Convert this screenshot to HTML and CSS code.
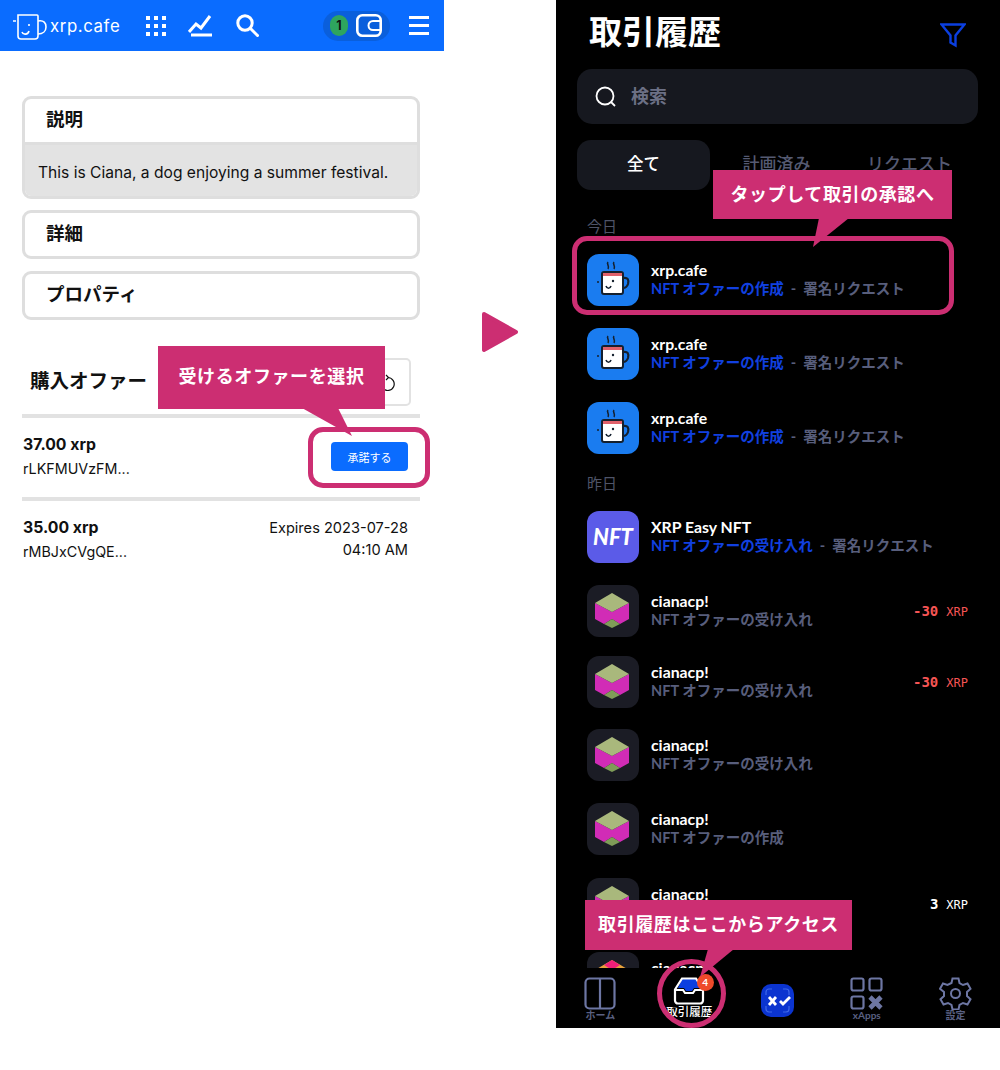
FILE: index.html
```html
<!doctype html>
<html lang="ja">
<head>
    <meta charset="UTF-8">
    <title>xrp.cafe</title>
    <link rel="stylesheet" href="styles.css">
</head>
<body>
<svg class="defs" width="0" height="0">
    <symbol id="cube" viewBox="0 0 52 52">
        <polygon points="8,18 25,27 42,18 42,34 33,39 25,34 17,39 8,34" fill="#d12cb6"/>
        <polygon points="25,8 42,18 25,27 8,18" fill="#a9b87c"/>
        <polygon points="25,34 33,39 25,43 17,39" fill="#7f9c58"/>
    </symbol>
    <symbol id="mug" viewBox="0 0 52 52">
        <path d="M21 8c-2 2 2 4 0 7M27 8c-2 2 2 4 0 7" fill="none" stroke="#14202e" stroke-width="1.6"/>
        <rect x="15" y="18" width="21" height="22" rx="2" fill="#fff" stroke="#14202e" stroke-width="2"/>
        <rect x="16" y="19" width="19" height="3" fill="#e0606a"/>
        <path d="M36 24c5-1 6 2 5 6-1 3-3 4-5 4" fill="none" stroke="#14202e" stroke-width="2.2"/>
        <circle cx="11" cy="28" r="1" fill="#14202e"/>
        <circle cx="26" cy="27" r="1.2" fill="#14202e"/>
        <path d="M19 32c1 3 4 3 5 0" fill="none" stroke="#14202e" stroke-width="1.6"/>
    </symbol>
</svg>

<div class="left">
    <header class="topbar">
        <svg class="logo" width="36" height="30" viewBox="0 0 36 30" fill="none" stroke="#fff" stroke-width="1.6">
            <path d="M1 10h3M6 4h19a1 1 0 0 1 1 1v20a3 3 0 0 1-3 3H9a3 3 0 0 1-3-3z"/>
            <path d="M26 10c6-1 8 2 8 6s-3 7-8 7"/>
            <path d="M10 21c1 3 6 3 7-1M17 13v2"/>
        </svg>
        <span class="brand">xrp.cafe</span>
        <svg class="grid-ico" width="20" height="20" viewBox="0 0 20 20" fill="#fff">
            <rect width="4" height="4"/><rect x="8" width="4" height="4"/><rect x="16" width="4" height="4"/>
            <rect y="8" width="4" height="4"/><rect x="8" y="8" width="4" height="4"/><rect x="16" y="8" width="4" height="4"/>
            <rect y="16" width="4" height="4"/><rect x="8" y="16" width="4" height="4"/><rect x="16" y="16" width="4" height="4"/>
        </svg>
        <svg class="chart-ico" width="24" height="22" viewBox="0 0 24 22" fill="none" stroke="#fff" stroke-width="3">
            <path d="M1 17 8 9l5 4 9-12"/>
            <path d="M3 20h21"/>
        </svg>
        <svg class="search-ico" width="23" height="23" viewBox="0 0 23 23" fill="none" stroke="#fff" stroke-width="3">
            <circle cx="9" cy="9" r="7.2"/>
            <path d="m14.500 14.500 7 7" stroke-linecap="round"/>
        </svg>
        <div class="wallet-pill">
            <span class="count">1</span>
            <svg width="26" height="23" viewBox="0 0 26 23" fill="none" stroke="#fff" stroke-width="2.6">
                <rect x="1.3" y="1.3" width="23.4" height="20.4" rx="5"/>
                <path d="M24 7h-7a4 4 0 0 0 0 9h7" stroke-width="2"/>
            </svg>
        </div>
        <div class="burger"><i></i><i></i><i></i></div>
    </header>

    <div class="content">
        <section class="card">
            <h3>説明</h3>
            <p>This is Ciana, a dog enjoying a summer festival.</p>
        </section>
        <section class="card card-detail"><h3>詳細</h3></section>
        <section class="card"><h3>プロパティ</h3></section>

        <div class="offers-head">
            <h2>購入オファー</h2>
            <div class="refresh">
                <svg width="16" height="18" viewBox="0 0 16 18" fill="none" stroke="#111" stroke-width="1.2">
                    <path d="M9 4.500a6.500 6.500 0 1 1-5 11M7 2l2.500 2.500L7 7"/>
                </svg>
            </div>
        </div>

        <div class="offer">
            <div>
                <b>37.00 xrp</b>
                <span>rLKFMUVzFM...</span>
            </div>
            <button class="accept">承諾する</button>
        </div>
        <div class="offer">
            <div>
                <b>35.00 xrp</b>
                <span>rMBJxCVgQE...</span>
            </div>
            <div class="expires">Expires 2023-07-28<br>04:10 AM</div>
        </div>
    </div>

    <div class="callout callout-offer">受けるオファーを選択</div>
    <svg class="tail tail-offer" width="52" height="29" viewBox="0 0 52 29"><polygon points="0,0 36,0 50,28" fill="#cc2e72"/></svg>
    <div class="ring ring-offer"></div>
</div>

<div class="middle">
    <svg width="38" height="42" viewBox="0 0 38 42"><path d="M3 3 35 21 3 39z" fill="#cc2e72" stroke="#cc2e72" stroke-width="4" stroke-linejoin="round"/></svg>
</div>

<div class="right">
    <div class="title-row">
        <h1>取引履歴</h1>
        <svg width="26" height="25" viewBox="0 0 26 25" fill="none" stroke="#0b3fe0" stroke-width="2.4">
            <path d="M1.500 1.500h23l-9 11v10l-5-3v-7z"/>
        </svg>
    </div>
    <div class="search">
        <svg width="21" height="21" viewBox="0 0 21 21" fill="none" stroke="#fff" stroke-width="1.8">
            <circle cx="10" cy="10" r="8.500"/>
            <path d="m16 16 4 4"/>
        </svg>
        <span>検索</span>
    </div>
    <div class="tabs">
        <div class="tab on">全て</div>
        <div class="tab">計画済み</div>
        <div class="tab">リクエスト</div>
    </div>

    <div class="list">
        <div class="day">今日</div>
        <div class="row">
            <svg class="app blue"><use href="#mug"/></svg>
            <div class="txt"><b>xrp.cafe</b><span><em>NFT オファーの作成</em> &nbsp;-&nbsp; 署名リクエスト</span></div>
        </div>
        <div class="row">
            <svg class="app blue"><use href="#mug"/></svg>
            <div class="txt"><b>xrp.cafe</b><span><em>NFT オファーの作成</em> &nbsp;-&nbsp; 署名リクエスト</span></div>
        </div>
        <div class="row">
            <svg class="app blue"><use href="#mug"/></svg>
            <div class="txt"><b>xrp.cafe</b><span><em>NFT オファーの作成</em> &nbsp;-&nbsp; 署名リクエスト</span></div>
        </div>
        <div class="day">昨日</div>
        <div class="row">
            <div class="app nft">NFT</div>
            <div class="txt"><b>XRP Easy NFT</b><span><em>NFT オファーの受け入れ</em> &nbsp;-&nbsp; 署名リクエスト</span></div>
        </div>
        <div class="row row-71">
            <svg class="app dark"><use href="#cube"/></svg>
            <div class="txt"><b>cianacp!</b><span>NFT オファーの受け入れ</span></div>
            <div class="amount neg">-30<small>XRP</small></div>
        </div>
        <div class="row row-73">
            <svg class="app dark"><use href="#cube"/></svg>
            <div class="txt"><b>cianacp!</b><span>NFT オファーの受け入れ</span></div>
            <div class="amount neg">-30<small>XRP</small></div>
        </div>
        <div class="row">
            <svg class="app dark"><use href="#cube"/></svg>
            <div class="txt"><b>cianacp!</b><span>NFT オファーの受け入れ</span></div>
        </div>
        <div class="row row-75">
            <svg class="app dark"><use href="#cube"/></svg>
            <div class="txt"><b>cianacp!</b><span>NFT オファーの作成</span></div>
        </div>
        <div class="row">
            <svg class="app dark"><use href="#cube"/></svg>
            <div class="txt"><b>cianacp!</b><span>NFT オファーの受け入れ</span></div>
            <div class="amount">3<small>XRP</small></div>
        </div>
        <div class="row">
            <svg class="app dark" viewBox="0 0 52 52">
                <polygon points="25,8 42,18 25,27 8,18" fill="#e8a23c"/>
                <polygon points="25,8 33,13 25,18 17,13" fill="#f01e78"/>
            </svg>
            <div class="txt"><b>cianacp!</b><span>NFT オファーの受け入れ</span></div>
        </div>
    </div>

    <nav class="tabbar">
        <div class="nav-item">
            <svg width="32" height="33" viewBox="0 0 32 33" fill="none" stroke="#6d76a3" stroke-width="2.2">
                <rect x="1.500" y="1.500" width="29" height="30" rx="4"/>
                <path d="M16 1.500v30"/>
            </svg>
            <span>ホーム</span>
        </div>
        <div class="nav-item nav-active">
            <svg width="32" height="28" viewBox="0 0 32 28" fill="none" stroke="#fff" stroke-width="2.2">
                <path d="M9 2h14l4 9H21l-2 3h-6l-2-3H5z" fill="#0b3fe0" stroke="none"/>
                <path d="M9 1.500h14l7 11v11a3 3 0 0 1-3 3H5a3 3 0 0 1-3-3v-11zM2 13h8l2 3h8l2-3h8"/>
            </svg>
            <span>取引履歴</span>
            <i class="badge">4</i>
        </div>
        <div class="nav-item nav-xumm">
            <svg width="33" height="33" viewBox="0 0 33 33">
                <rect width="33" height="33" rx="10" fill="#0b34d0"/>
                <path d="M5 11V8a3 3 0 0 1 3-3h3M22 5h3a3 3 0 0 1 3 3v3M28 22v3a3 3 0 0 1-3 3h-3M11 28H8a3 3 0 0 1-3-3v-3" fill="none" stroke="#3f68e8" stroke-width="1.2"/>
                <path d="m8 13 7 8m0-8-7 8M19 17l3 3 7-7" fill="none" stroke="#fff" stroke-width="2.800"/>
            </svg>
        </div>
        <div class="nav-item">
            <svg width="33" height="33" viewBox="0 0 33 33" fill="none" stroke="#6d76a3" stroke-width="2.2">
                <rect x="1.500" y="1.500" width="12" height="12" rx="2"/>
                <rect x="19.500" y="1.500" width="12" height="12" rx="2"/>
                <rect x="1.500" y="19.500" width="12" height="12" rx="2"/>
                <path d="m20 20 11 11m0-11-11 11" stroke-width="4.600"/>
            </svg>
            <span>xApps</span>
        </div>
        <div class="nav-item">
            <svg width="33" height="33" viewBox="0 0 33 33" fill="none" stroke="#6d76a3" stroke-width="2">
                <circle cx="16.500" cy="16.500" r="4.500"/>
                <path d="M13.500 1.500h6l1 4.500 3.500 2 4.500-1.500 3 5.200-3.500 3.200v4.200l3.500 3.200-3 5.200-4.500-1.500-3.500 2-1 4.500h-6l-1-4.500-3.500-2-4.500 1.500-3-5.200 3.500-3.200v-4.200L1 11.700l3-5.200 4.500 1.500 4-2z"/>
            </svg>
            <span>設定</span>
        </div>
    </nav>

    <div class="callout callout-tap">タップして取引の承認へ</div>
    <svg class="tail tail-tap" width="36" height="29" viewBox="0 0 36 29"><polygon points="6,0 36,0 0,29" fill="#cc2e72"/></svg>
    <div class="ring ring-tap"></div>
    <div class="callout callout-history">取引履歴はここからアクセス</div>
    <svg class="tail tail-history" width="36" height="28" viewBox="0 0 36 28"><polygon points="8,0 34,0 0,28" fill="#cc2e72"/></svg>
    <div class="ring ring-history"></div>
</div>
</body>
</html>
```

FILE: styles.css
```css
* {
    margin: 0;
    padding: 0;
    box-sizing: border-box;
}

body {
    width: 1000px;
    height: 1070px;
    display: flex;
    align-items: flex-start;
    background: #fff;
    overflow: hidden;
    font-family: Inter, "Noto Sans CJK JP", sans-serif;
    color: #111;
}

.defs {
    position: absolute;
}

/* left phone */
.left {
    position: relative;
    width: 444px;
    height: 600px;
}

.topbar {
    height: 51px;
    background: #0a6cff;
    display: flex;
    align-items: center;
    padding-left: 12px;
}

.brand {
    margin-left: 2px;
    width: 70px;
    font-size: 16.8px;
    letter-spacing: 0.6px;
    color: #fff;
}

.grid-ico {
    margin-left: 26px;
}

.chart-ico {
    margin-left: 22px;
}

.search-ico {
    margin-left: 24px;
}

.wallet-pill {
    margin-left: 64px;
    width: 67px;
    height: 30px;
    border-radius: 15px;
    background: #0a5fdc;
    display: flex;
    align-items: center;
    padding-left: 7px;
    gap: 8px;
}

.count {
    width: 18px;
    height: 21px;
    border-radius: 10px;
    background: #2ea55e;
    color: #111;
    font-size: 12.5px;
    font-weight: 700;
    line-height: 21px;
    text-align: center;
}

.burger {
    margin-left: 19px;
    width: 20px;
    display: flex;
    flex-direction: column;
    gap: 5px;
}

.burger i {
    height: 3px;
    background: #fff;
}

.content {
    padding: 45px 24px 0 22px;
}

.card {
    border: 3px solid #dedede;
    border-radius: 9px;
    margin-bottom: 11px;
    overflow: hidden;
}

.card-detail {
    margin-bottom: 12px;
}

.card h3 {
    height: 43px;
    padding-left: 21px;
    font-size: 18.5px;
    font-weight: 600;
    line-height: 41px;
}

.card p {
    border-top: 3px solid #dedede;
    background: #e3e3e3;
    height: 57px;
    margin-bottom: -3px;
    padding: 19px 0 0 13px;
    font-size: 15.6px;
    line-height: 18px;
    white-space: nowrap;
}

.offers-head {
    display: flex;
    justify-content: space-between;
    align-items: center;
    margin-top: 38px;
    height: 48px;
    padding-left: 8px;
    margin-right: 9px;
}

.offers-head h2 {
    padding-bottom: 5px;
    font-size: 19.5px;
    font-weight: 700;
}

.refresh {
    width: 40px;
    height: 48px;
    border: 2px solid #e2e2e2;
    border-radius: 5px;
    display: flex;
    align-items: center;
    justify-content: flex-end;
    padding-right: 14px;
}

.offer {
    margin-top: 8px;
    border-top: 4px solid #e2e2e2;
    height: 83px;
    padding: 16px 12px 0 1px;
    display: flex;
    justify-content: space-between;
}

.offer + .offer {
    margin-top: 0;
}

.offer b {
    display: block;
    font-size: 15.8px;
    line-height: 22px;
}

.offer span {
    display: block;
    margin-top: 1px;
    font-size: 14.3px;
    line-height: 24px;
}

.accept {
    margin-top: 8px;
    width: 77px;
    height: 29px;
    border: 0;
    border-radius: 4px;
    background: #0a6cff;
    color: #fff;
    font-family: inherit;
    font-size: 11px;
}

.expires {
    text-align: right;
    font-size: 14.6px;
    line-height: 22px;
}

/* arrow between the phones */
.middle {
    width: 112px;
    padding: 311px 0 0 37px;
}

/* right phone */
.right {
    position: relative;
    width: 444px;
    height: 1028px;
    background: #000;
    display: flex;
    flex-direction: column;
    font-family: Lato, "Noto Sans CJK JP", sans-serif;
    color: #fff;
}

.title-row {
    height: 69px;
    padding: 11px 34px 0 33px;
    display: flex;
    justify-content: space-between;
    align-items: flex-start;
}

.title-row h1 {
    font-size: 33px;
    font-weight: 700;
    line-height: 41px;
}

.title-row svg {
    margin-top: 12px;
}

.search {
    margin: 0 22px 0 21px;
    height: 55px;
    border-radius: 15px;
    background: #16181f;
    display: flex;
    align-items: center;
    gap: 15px;
    padding-left: 18px;
}

.search span {
    margin-top: -3px;
    font-size: 18px;
    font-weight: 700;
    color: #6c7085;
}

.tabs {
    margin: 16px 22px 18px 21px;
    display: flex;
    height: 50px;
}

.tab {
    width: 133px;
    border-radius: 14px;
    text-align: center;
    font-size: 17px;
    font-weight: 500;
    line-height: 48px;
    color: #555a72;
}

.tab.on {
    background: #16181f;
    color: #fff;
    font-size: 16.5px;
}

.list {
    flex: 1;
    min-height: 0;
    overflow: hidden;
    padding-left: 31px;
}

.day {
    height: 35px;
    font-size: 15px;
    line-height: 36px;
    color: #4f5468;
}

.row {
    height: 74px;
    display: flex;
    align-items: flex-start;
    padding-top: 11px;
    padding-right: 32px;
}

.row-71 {
    height: 71px;
}

.row-73 {
    height: 73px;
}

.row-75 {
    height: 75px;
}

.app {
    flex: none;
    width: 52px;
    height: 52px;
    border-radius: 12px;
}

.blue {
    background: #1a7cf0;
}

.dark {
    background: #1b1c25;
}

.nft {
    background: #5b5be8;
    color: #fff;
    font-size: 22px;
    font-weight: 900;
    font-style: italic;
    line-height: 52px;
    text-align: center;
}

.txt {
    flex: 1;
    margin-left: 12px;
    padding-top: 6px;
}

.txt b {
    display: block;
    font-size: 15.8px;
    font-weight: 700;
    line-height: 20px;
}

.txt span {
    display: block;
    font-size: 14.5px;
    font-weight: 700;
    line-height: 18px;
    color: #585e7c;
    white-space: nowrap;
}

.txt em {
    font-style: normal;
    color: #1140e0;
}

.amount {
    padding-top: 16px;
    font-family: "DejaVu Sans Mono", monospace;
    font-size: 14px;
    font-weight: 700;
    line-height: 20px;
}

.amount small {
    margin-left: 8px;
    font-size: 12px;
    font-weight: 400;
}

.neg {
    color: #f65555;
}

.tabbar {
    height: 60px;
    background: #000;
    display: flex;
}

.nav-item {
    position: relative;
    width: 88.8px;
    padding-top: 9px;
    display: flex;
    flex-direction: column;
    align-items: center;
    font-size: 10px;
    font-weight: 700;
    color: #5a6082;
}

.nav-item span {
    margin-top: -1px;
    line-height: 12px;
    white-space: nowrap;
}

.nav-active {
    color: #fff;
    font-size: 11.5px;
    font-weight: 500;
}

.nav-active span {
    margin-top: 1px;
}

.badge {
    position: absolute;
    top: 6px;
    right: 20px;
    width: 17px;
    height: 17px;
    border-radius: 50%;
    background: #ee4a2a;
    color: #fff;
    font-size: 10px;
    font-style: normal;
    font-weight: 700;
    line-height: 17px;
    text-align: center;
}

.nav-xumm {
    padding-top: 16px;
}

/* annotations laid over the screenshots */
.callout {
    position: absolute;
    background: #cc2e72;
    color: #fff;
    font-family: "Noto Sans CJK JP", sans-serif;
    font-size: 18px;
    font-weight: 700;
    letter-spacing: 0.6px;
    text-align: center;
    white-space: nowrap;
}

.tail {
    position: absolute;
}

.ring {
    position: absolute;
    border: 5px solid #cc2e72;
}

.callout-offer {
    left: 158px;
    top: 346px;
    width: 227px;
    height: 63px;
    line-height: 58px;
}

.tail-offer {
    left: 302px;
    top: 408px;
}

.ring-offer {
    left: 308px;
    top: 427px;
    width: 122px;
    height: 61px;
    border-radius: 15px;
}

.callout-tap {
    left: 157px;
    top: 170px;
    width: 239px;
    height: 49px;
    line-height: 47px;
}

.tail-tap {
    left: 257px;
    top: 218px;
}

.ring-tap {
    left: 16px;
    top: 236px;
    width: 382px;
    height: 79px;
    border-radius: 15px;
}

.callout-history {
    left: 29px;
    top: 900px;
    width: 267px;
    height: 50px;
    line-height: 47px;
}

.tail-history {
    left: 144px;
    top: 949px;
}

.ring-history {
    left: 101px;
    top: 959px;
    width: 69px;
    height: 69px;
    border-radius: 50%;
}
```
